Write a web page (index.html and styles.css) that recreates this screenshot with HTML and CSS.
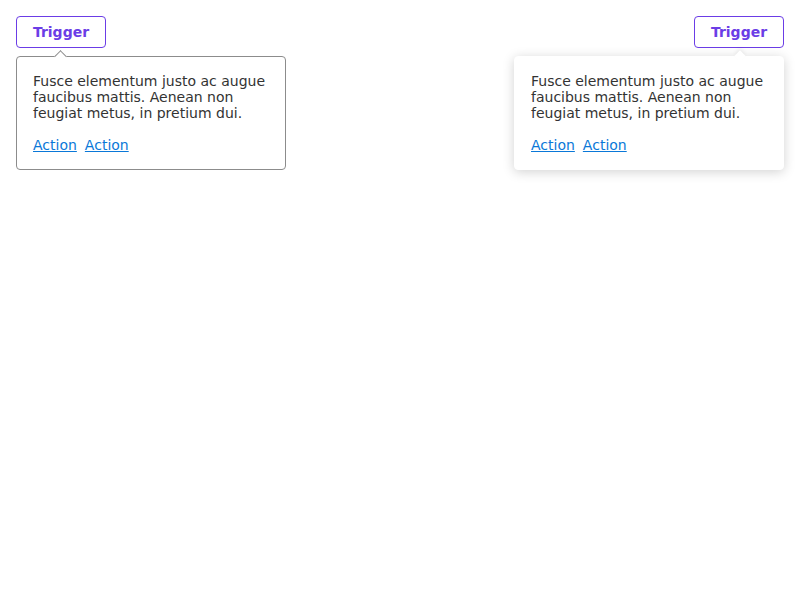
FILE: index.html
```html
<!DOCTYPE html>
<html>
<head>
<meta charset="utf-8">
<link rel="stylesheet" href="styles.css">
</head>
<body>
<div class="row">
  <div class="anchor anchor-start">
    <button class="trigger">Trigger</button>
    <div class="popover popover-outline">
      <span class="arrow"></span>
      <p class="text">Fusce elementum justo ac augue faucibus mattis. Aenean non feugiat metus, in pretium dui.</p>
      <div class="actions"><a href="#">Action</a><a href="#">Action</a></div>
    </div>
  </div>
  <div class="anchor anchor-end">
    <button class="trigger">Trigger</button>
    <div class="popover popover-shadow">
      <span class="arrow"></span>
      <p class="text">Fusce elementum justo ac augue faucibus mattis. Aenean non feugiat metus, in pretium dui.</p>
      <div class="actions"><a href="#">Action</a><a href="#">Action</a></div>
    </div>
  </div>
</div>
</body>
</html>
```
FILE: styles.css
```css
html, body {
  margin: 0;
  background: #fff;
  font-family: "DejaVu Sans", sans-serif;
}
.row {
  display: flex;
  justify-content: space-between;
  align-items: flex-start;
  padding: 16px;
}
.anchor {
  display: flex;
  flex-direction: column;
  gap: 8px;
}
.anchor-start { align-items: flex-start; }
.anchor-end { align-items: flex-end; }
.trigger {
  box-sizing: border-box;
  width: 90px;
  height: 32px;
  border: 1px solid #6b3de6;
  border-radius: 4px;
  background: #fff;
  color: #6b3de6;
  font-family: "DejaVu Sans", sans-serif;
  font-size: 14px;
  font-weight: bold;
  padding: 0;
  display: block;
}
.popover {
  position: relative;
  box-sizing: border-box;
  width: 270px;
  padding: 16px;
  border-radius: 4px;
  background: #fff;
  color: #333;
  font-size: 14px;
  line-height: 16px;
}
.popover-outline {
  border: 1px solid #8c8c8c;
}
.popover-shadow {
  border: 1px solid #fff;
  box-shadow: 0 2px 12px rgba(0, 0, 0, 0.18);
}
.arrow {
  position: absolute;
  top: -5px;
  width: 8px;
  height: 8px;
  background: #fff;
  transform: rotate(45deg);
}
.popover-outline .arrow {
  left: 39px;
  border-top: 1px solid #8c8c8c;
  border-left: 1px solid #8c8c8c;
}
.popover-shadow .arrow {
  right: 39px;
  box-shadow: -2px -2px 4px rgba(0, 0, 0, 0.06);
}
.text {
  margin: 0 0 16px;
}
.actions {
  display: flex;
  gap: 8px;
}
.actions a {
  color: #0a78d8;
  text-decoration: underline;
}
```
